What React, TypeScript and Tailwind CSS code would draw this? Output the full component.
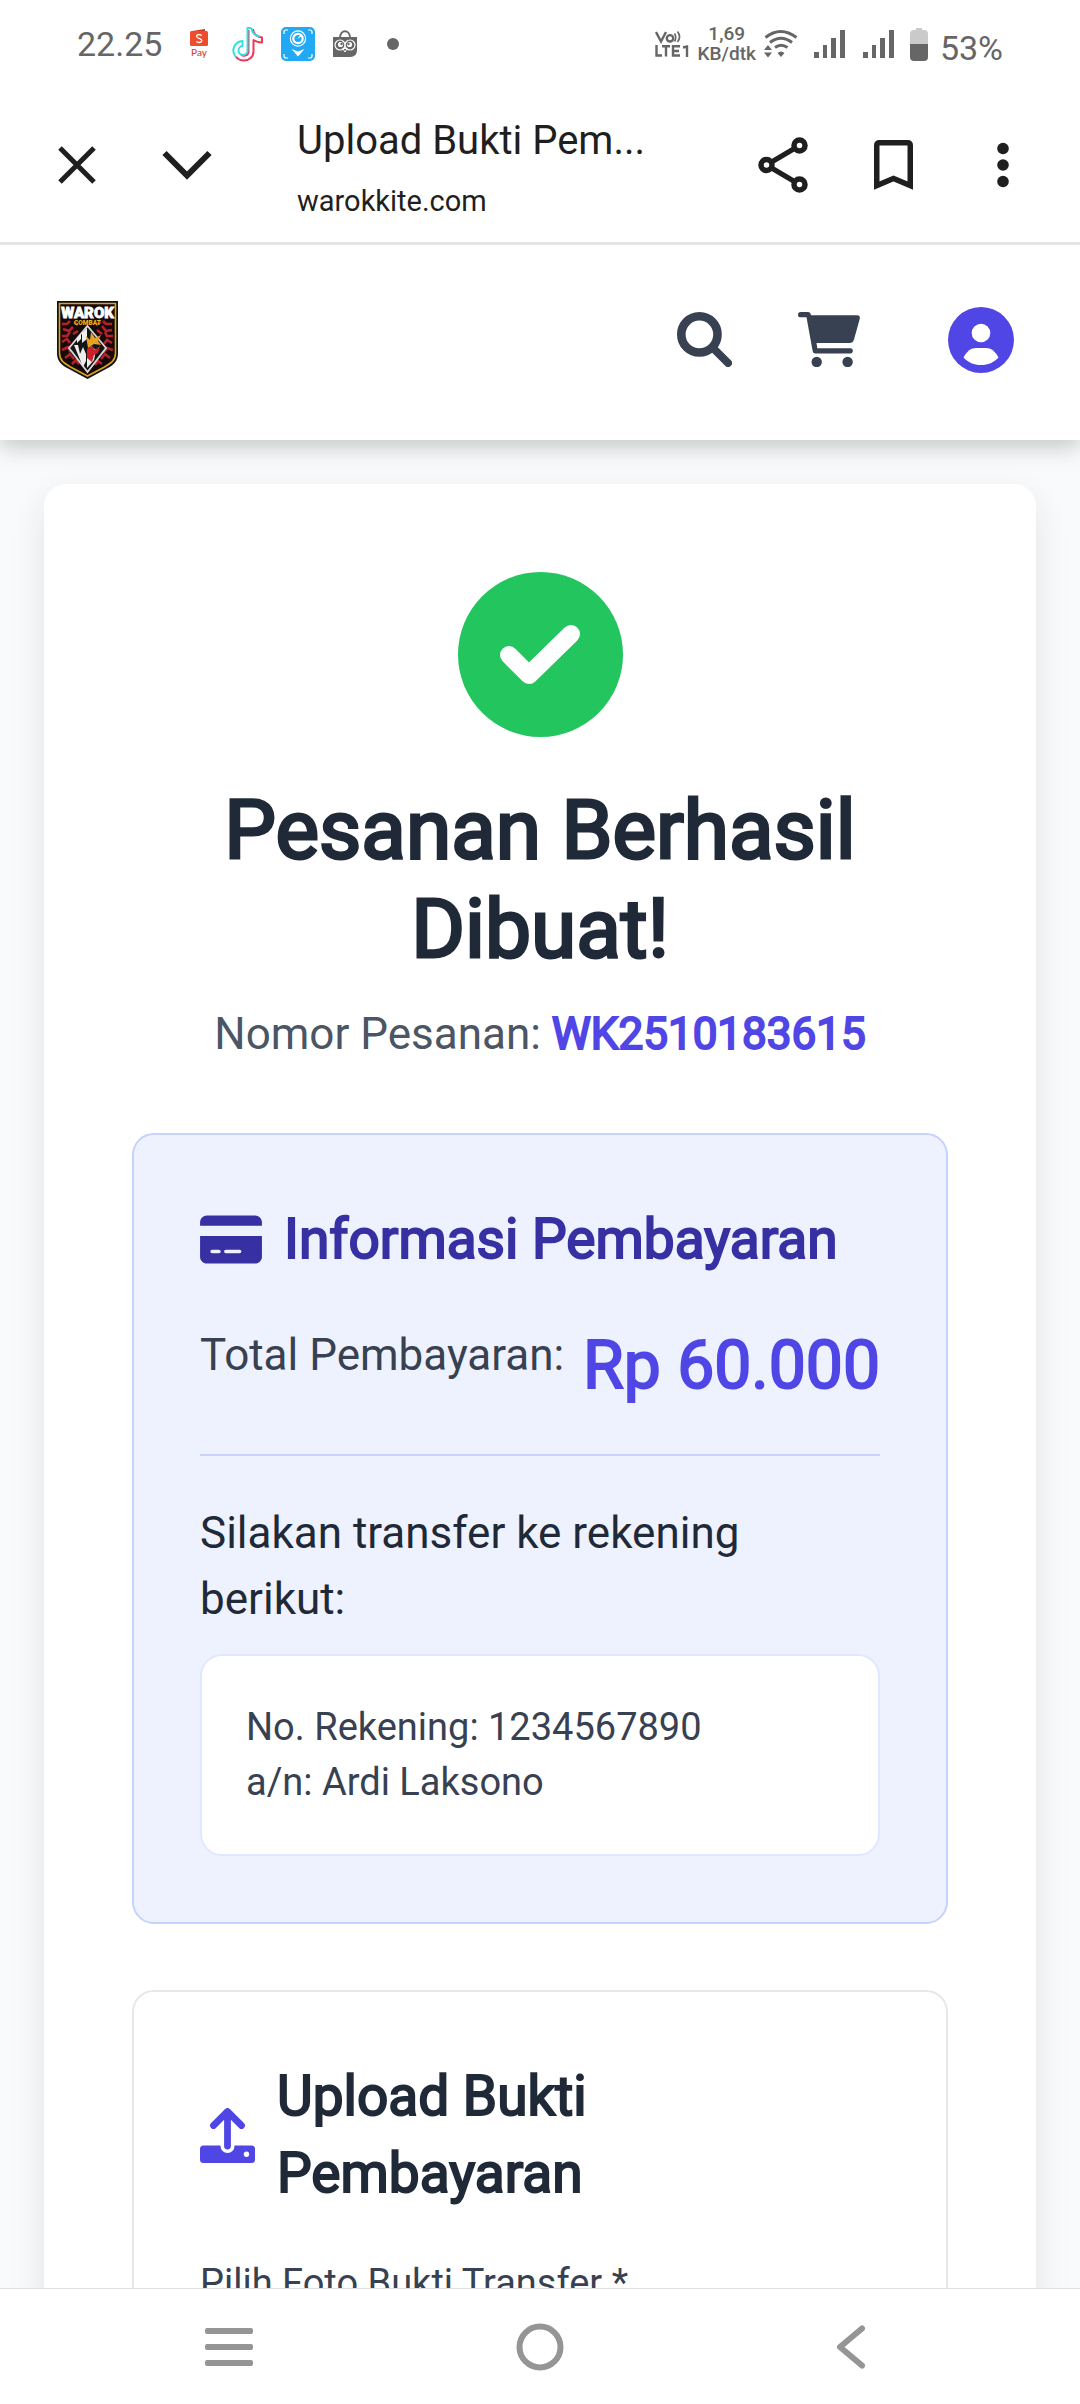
import React from "react";
import { FaCreditCard } from "react-icons/fa6";

function ShopeePayIcon() {
  return (
    <svg viewBox="0 0 18 30" className="mr-1.5 h-[30px] w-[18px]">
      <path d="M2 2 15 0v3H2z" fill="#c93a20" />
      <rect x="0" y="2" width="18" height="15" rx="1.5" fill="#ee4d2d" />
      <path d="M11.6 6.6C10.4 5 6.4 5.200 6.600 7.500c.2 2.200 5.200 1.500 5.200 4.100 0 2.400-4 2.400-5.400.7" fill="none" stroke="#fff" strokeWidth="1.3" />
      <text x="9" y="26.500" textAnchor="middle" fontSize="10" fontWeight="500" fill="#d8432a" fontFamily="Lato, sans-serif">Pay</text>
    </svg>
  );
}

function TikTokIcon() {
  return (
    <svg viewBox="0 0 31 35" className="h-[35px] w-[31px]" fill="none" strokeLinejoin="round">
      <path d="M21 2c.6 5 4 8 9 8.500v5c-3.500 0-6-1-8.500-2.500v11.500c0 5.500-4.500 9-9.500 9-3.500 0-6.500-1.500-8-4M8.500 27a4.500 4.500 0 0 0 8-2V3" stroke="#f0375a" strokeWidth="2" />
      <path d="M19.500 1h-4v22.500a4.500 4.500 0 1 1-5-4.500v-5A9.500 9.500 0 0 0 4 30M19.500 1c.5 5 3.500 8 8.500 8.500" stroke="#35dfe2" strokeWidth="2" />
    </svg>
  );
}

function ScannerIcon() {
  return (
    <svg viewBox="0 0 34 34" className="size-[34px]">
      <rect width="34" height="34" rx="5" fill="#22a9f5" />
      <g fill="none" stroke="#fff" strokeWidth="1.2">
        <path d="M3 7V5q0-2 2-2h2M27 3h2q2 0 2 2v2M31 27v2q0 2-2 2h-2M7 31H5q-2 0-2-2v-2" />
        <circle cx="17" cy="11.500" r="7.600" />
      </g>
      <circle cx="17" cy="11.500" r="4.700" fill="none" stroke="#fff" strokeWidth="2.200" />
      <path d="M16 12 20 7.500l1.500 1.500z" fill="#fff" />
      <path d="M10.500 22l6.500 2.500 6.500-2.500-6.500 7.500z" fill="#fff" />
    </svg>
  );
}

function OwlBagIcon() {
  return (
    <svg viewBox="0 0 24 26" className="h-[26px] w-6 overflow-visible">
      <path d="M7 7c0-9 10-9 10 0" fill="none" stroke="#666" strokeWidth="1.800" />
      <path d="M0 6h24v13q0 7-7 7H0z" fill="#666" />
      <g fill="#666" stroke="#fff" strokeWidth="1.200">
        <circle cx="7" cy="14" r="5" />
        <circle cx="17" cy="14" r="5" />
      </g>
      <circle cx="7.500" cy="13.500" r="2.600" fill="#fff" />
      <circle cx="16.500" cy="13.500" r="2.600" fill="#fff" />
      <circle cx="8.500" cy="13" r="1.200" fill="#666" />
      <circle cx="15.500" cy="13" r="1.200" fill="#666" />
      <path d="M9.800 17.500h4.400L12 21z" fill="#666" stroke="#fff" strokeWidth="1" />
    </svg>
  );
}

function VolteIcon() {
  return (
    <svg viewBox="0 0 35 30" className="h-[30px] w-[35px]" fill="none" stroke="#666" strokeWidth="2.400">
      <path d="M1 3l5 9.500L11 3" />
      <circle cx="15" cy="9.300" r="3.200" />
      <path d="M19.500 4.500q2.500 4 0 8M22.500 2.500q4 5 0 10.500" strokeWidth="1.700" />
      <path d="M1.500 16v10.500H7M7 17.200h8M11 17v10.500M25 17.200h-7v9.300h7M18 22h6M28 18.500l4-1v10.500" />
    </svg>
  );
}

function WifiIcon() {
  return (
    <svg viewBox="0 0 34 30" className="h-[30px] w-[34px]">
      <g fill="none" stroke="#666" strokeWidth="3">
        <path d="M1.500 8.500q15-12 31 0" />
        <path d="M6 13.500q11-8.500 22 0" />
        <path d="M11 18.500q6-4.500 12.500 0" />
      </g>
      <path d="M13.500 24q3.500-3 7 0L17 28zM0 21l4-5 4 5zM0 23.500h8l-4 5z" fill="#666" />
    </svg>
  );
}

function SignalIcon() {
  return (
    <svg viewBox="0 0 31 28" className="h-7 w-[31px]" fill="#666">
      <path d="M0 22h5v6H0zM9 15h4v13H9zM17 8h5v20h-5zM26 0h5v28h-5z" />
    </svg>
  );
}

function BatteryIcon() {
  return (
    <svg viewBox="0 0 18 33" className="h-[33px] w-[18px]">
      <path d="M6 0h6v2h2q4 0 4 4v11H0V6q0-4 4-4h2z" fill="#cacaca" />
      <path d="M0 16h18v13q0 4-4 4H4q-4 0-4-4z" fill="#666" />
    </svg>
  );
}

function StatusBar() {
  return (
    <div className="flex h-[88px] items-center justify-between px-[77px] text-[#666]">
      <div className="flex items-center gap-[18px]">
        <span className="mr-2.5 text-[34px] leading-10">22.25</span>
        <ShopeePayIcon />
        <TikTokIcon />
        <ScannerIcon />
        <OwlBagIcon />
        <span className="ml-3 size-3 rounded-full bg-[#666]" />
      </div>
      <div className="flex items-center gap-2">
        <VolteIcon />
        <span className="text-center text-[19px] leading-5 font-medium">
          1,69
          <br />
          KB/dtk
        </span>
        <WifiIcon />
        <span className="flex gap-[18px] px-2">
          <SignalIcon />
          <SignalIcon />
        </span>
        <BatteryIcon />
        <span className="pt-2 pl-1 text-[34px] leading-10">53%</span>
      </div>
    </div>
  );
}

function BrowserBar() {
  return (
    <div className="flex h-[157px] items-center border-b-[3px] border-[#e4e4e4] text-[#1f1f1f]">
      <button aria-label="Tutup" className="ml-11 grid size-[66px] place-items-center">
        <svg viewBox="0 0 38 38" className="size-[38px]" fill="none" stroke="currentColor" strokeWidth="5">
          <path d="M2 2l34 34M36 2 2 36" />
        </svg>
      </button>
      <button aria-label="Perkecil" className="ml-11 grid size-[66px] place-items-center">
        <svg viewBox="0 0 50 30" className="h-[30px] w-[50px]" fill="none" stroke="currentColor" strokeWidth="6">
          <path d="M2.500 3 25 25.500 47.500 3" />
        </svg>
      </button>
      <div className="ml-[77px] min-w-0 flex-1 pt-3">
        <p className="truncate text-[40px] leading-[60px]">Upload Bukti Pem...</p>
        <p className="truncate text-[29px] leading-[60px]">warokkite.com</p>
      </div>
      <div className="flex gap-11 pr-11">
        <button aria-label="Bagikan" className="grid size-[66px] place-items-center">
          <svg viewBox="0 0 50 56" className="h-14 w-[50px]" fill="none" stroke="currentColor">
            <path d="M8.500 28 41.500 8.500M8.500 28l33 19.500" strokeWidth="5" />
            <g fill="#fff" strokeWidth="5.500">
              <circle cx="8.500" cy="28" r="5.500" />
              <circle cx="41.500" cy="8.500" r="5.500" />
              <circle cx="41.500" cy="47.500" r="5.500" />
            </g>
          </svg>
        </button>
        <button aria-label="Simpan" className="grid size-[66px] place-items-center">
          <svg viewBox="0 0 39 50" className="h-[50px] w-[39px]" fill="none" stroke="currentColor" strokeWidth="5.500">
            <path d="M2.750 45.500V5.500q0-2.750 2.750-2.750h28q2.750 0 2.750 2.750v40L19.500 38.500z" />
          </svg>
        </button>
        <button aria-label="Menu lainnya" className="grid size-[66px] place-items-center">
          <svg viewBox="0 0 12 46" className="h-[46px] w-3" fill="currentColor">
            <circle cx="6" cy="6.500" r="5.800" />
            <circle cx="6" cy="23" r="5.800" />
            <circle cx="6" cy="39.500" r="5.800" />
          </svg>
        </button>
      </div>
    </div>
  );
}

function WarokLogo() {
  return (
    <svg viewBox="0 0 62 80" className="h-20 w-[62px]" role="img" aria-label="Warok Combat">
      <path d="M0 1h61v52c0 8-4 12-12 16L30.500 79 12 69C4 65 0 61 0 53z" fill="#111" />
      <path d="M2.500 3.500h56V53c0 7-4 10-11 14L30.500 76 13.500 67c-7-4-11-7-11-14z" fill="#17090a" stroke="#d9a520" strokeWidth="1.600" />
      <g fill="none" stroke="#b3222a" strokeWidth="2.600">
        <path d="M5 24h5l3-3M6 29l6 2 4-4M5 36h5l3-4M5 42l5-3 3 4M5 50l6-3 2 4 5-1M8 58l5-4 4 5M15 64l4-4 3 4M55 24h-6l-3-3M55 30l-6 1-4-5M56 36h-6l-2-4M55 43l-5-3-3 4M56 50l-6-2-3 4-4-1M53 58l-5-4-4 5M45 64l-4-3-3 4M17 22l4 3M44 22l-5 3M13 47l4-1M48 47l-4-1M16 34l5-3M45 34l-5-4" />
      </g>
      <path d="M30.500 26 49 48 30.500 72 12 48z" fill="#151515" stroke="#d8d8d8" strokeWidth="1.800" />
      <path d="M20 38l4-4v5l-4 4zM25 33l5-5v11l-5 4zM17 45h4l2 9 3-7 3 7v7l-3 6zM30 54l4-8 5 4-2 10-7 8z" fill="#eee" />
      <path d="M29 36l4 4 1-8 4 6 6-3-3 6 3 4-7-1-6 4z" fill="#e5a323" />
      <path d="M30 49l5-3 3 4 5-4-2 7-4 2-2 7-5-4z" fill="#cc1f2a" />
      <text x="30.500" y="17.500" textAnchor="middle" fontSize="15" fontWeight="900" fill="#fff" stroke="#fff" strokeWidth="0.800" fontFamily="Roboto, sans-serif">WAROK</text>
      <text x="30.500" y="24.500" textAnchor="middle" fontSize="6.500" fontWeight="900" fill="#e3b71c" fontFamily="Roboto, sans-serif">COMBAT</text>
    </svg>
  );
}

function SiteHeader() {
  return (
    <header className="relative z-10 flex h-[195px] items-center justify-between bg-white pr-[66px] pb-1.5 pl-[57px] shadow-[0_6px_22px_rgba(30,45,40,0.26)]">
      <a href="#beranda" className="block">
        <WarokLogo />
      </a>
      <nav className="flex items-center text-[#374151]">
        <button aria-label="Cari">
          <svg viewBox="0 0 55 55" className="size-[55px]" fill="none" stroke="currentColor">
            <circle cx="22.400" cy="22.400" r="18.100" strokeWidth="8.600" />
            <path d="M36 36 51 51" strokeWidth="8" strokeLinecap="round" />
          </svg>
        </button>
        <a href="#keranjang" aria-label="Keranjang" className="ml-[66px]">
          <svg viewBox="0 0 62 55" className="h-[55px] w-[62px]" fill="currentColor">
            <path d="M2.700 0H10q2.400 0 3 3.300H59q3.500 0 2.700 3.700L56 27.500q-1 3.500-4.500 3.500h-33l.8 5.200h33q2.500 0 2.500 2.600t-2.500 2.600h-35q-2.200 0-2.600-2.200L8.500 5.300H2.700Q0 5.300 0 2.650T2.700 0z" />
            <circle cx="18.700" cy="50" r="5.200" />
            <circle cx="49.600" cy="50" r="5.200" />
          </svg>
        </a>
        <button aria-label="Akun" className="ml-[88px]">
          <svg viewBox="0 0 66 66" className="size-[66px]">
            <circle cx="33" cy="33" r="33" fill="#4f46e5" />
            <circle cx="33" cy="26" r="9.300" fill="#fff" />
            <path d="M15.500 50.500C19 44 23 41 28 41h10c5 0 9 3 12.500 9.500C46 55.500 40 58 33 58s-13-2.500-17.500-7.500z" fill="#fff" />
          </svg>
        </button>
      </nav>
    </header>
  );
}

function UploadIcon() {
  return (
    <svg viewBox="0 0 55 55" className="size-[55px] shrink-0 text-[#4f46e5]" fill="none">
      <rect x="0" y="37.500" width="55" height="17.500" rx="3.500" fill="currentColor" />
      <path d="M27.500 30v8" stroke="#fff" strokeWidth="14" strokeLinecap="round" />
      <path d="M27.500 4v34M13.500 17.500l14-14 14 14" stroke="currentColor" strokeWidth="6.800" strokeLinecap="round" strokeLinejoin="round" />
      <circle cx="46.500" cy="46.300" r="2.700" fill="#fff" />
    </svg>
  );
}

function PaymentInfo() {
  return (
    <section className="mt-[66px] rounded-[22px] border-2 border-[#c7d2fe] bg-[#eef2ff] p-[66px]">
      <h2 className="flex items-center gap-[22px] text-[55px] leading-[77px] text-[#3730a3]">
        <FaCreditCard className="h-[55px] w-[62px] shrink-0" />
        <span className="[-webkit-text-stroke:2px]">Informasi Pembayaran</span>
      </h2>
      <div className="mt-11 flex justify-between border-b-2 border-[#c7d2fe] pb-11">
        <span className="text-[44px] leading-[66px] text-[#374151]">Total Pembayaran:</span>
        <span className="text-[66px] leading-[88px] text-[#4f46e5] [-webkit-text-stroke:2px]">Rp 60.000</span>
      </div>
      <p className="mt-11 text-[44px] leading-[66px] text-[#1f2937]">Silakan transfer ke rekening berikut:</p>
      <div className="mt-[22px] rounded-[22px] border-2 border-[#e0e7ff] bg-white p-11 text-[38px] leading-[55px] text-[#374151]">
        <p>No. Rekening: 1234567890</p>
        <p>a/n: Ardi Laksono</p>
      </div>
    </section>
  );
}

function UploadForm() {
  return (
    <section className="mt-[66px] rounded-[22px] border-2 border-[#e5e7eb] p-[66px]">
      <h2 className="flex items-center gap-[22px] text-[55px] leading-[77px] text-[#1f2937]">
        <UploadIcon />
        <span className="[-webkit-text-stroke:2px]">Upload Bukti Pembayaran</span>
      </h2>
      <label htmlFor="bukti" className="mt-11 block text-[38px] leading-[55px] text-[#374151]">
        Pilih Foto Bukti Transfer *
      </label>
      <input id="bukti" type="file" className="mt-[22px] text-[38px]" />
    </section>
  );
}

function NavigationBar() {
  return (
    <nav className="flex h-[116px] shrink-0 items-center justify-around border-t border-[#dedede] bg-white px-[74px] text-[#959595]">
      <button aria-label="Aplikasi terbaru" className="grid size-20 place-items-center">
        <svg viewBox="0 0 48 38" className="h-[38px] w-12" fill="currentColor">
          <rect y="0" width="48" height="6" rx="2" />
          <rect y="16" width="48" height="6" rx="2" />
          <rect y="32" width="48" height="6" rx="2" />
        </svg>
      </button>
      <button aria-label="Layar utama" className="grid size-20 place-items-center">
        <svg viewBox="0 0 48 48" className="size-12" fill="none" stroke="currentColor" strokeWidth="6">
          <circle cx="24" cy="24" r="20.500" />
        </svg>
      </button>
      <button aria-label="Kembali" className="grid size-20 place-items-center">
        <svg viewBox="0 0 30 44" className="h-11 w-[30px]" fill="none" stroke="currentColor" strokeWidth="6" strokeLinecap="round" strokeLinejoin="round">
          <path d="M26 3.500 4 22l22 18.500" />
        </svg>
      </button>
    </nav>
  );
}

export default function App() {
  return (
    <div className="flex h-screen flex-col overflow-hidden bg-white font-['Roboto',sans-serif]">
      <StatusBar />
      <BrowserBar />
      <div className="flex min-h-0 flex-1 flex-col overflow-hidden bg-[#f9fafb]">
        <SiteHeader />
        <main className="min-h-0 flex-1 overflow-hidden px-11 pt-11">
          <article className="rounded-[22px] bg-white p-[88px] shadow-[0_14px_34px_rgba(30,41,59,0.1)]">
            <div className="text-center">
              <span className="mx-auto grid size-[165px] place-items-center rounded-full bg-[#22c55e]">
                <svg viewBox="0 0 80 60" className="h-[60px] w-20" fill="none" stroke="#fff" strokeWidth="18" strokeLinecap="round" strokeLinejoin="round">
                  <path d="M9 30l20 20 42-41" />
                </svg>
              </span>
              <h1 className="mt-11 text-[82px] leading-[99px] text-[#1f2937] [-webkit-text-stroke:3px]">Pesanan Berhasil Dibuat!</h1>
              <p className="mt-[22px] text-[44px] leading-[66px] text-[#4b5563]">
                Nomor Pesanan: <span className="text-[#4f46e5] [-webkit-text-stroke:2px]">WK2510183615</span>
              </p>
            </div>
            <PaymentInfo />
            <UploadForm />
          </article>
        </main>
      </div>
      <NavigationBar />
    </div>
  );
}
